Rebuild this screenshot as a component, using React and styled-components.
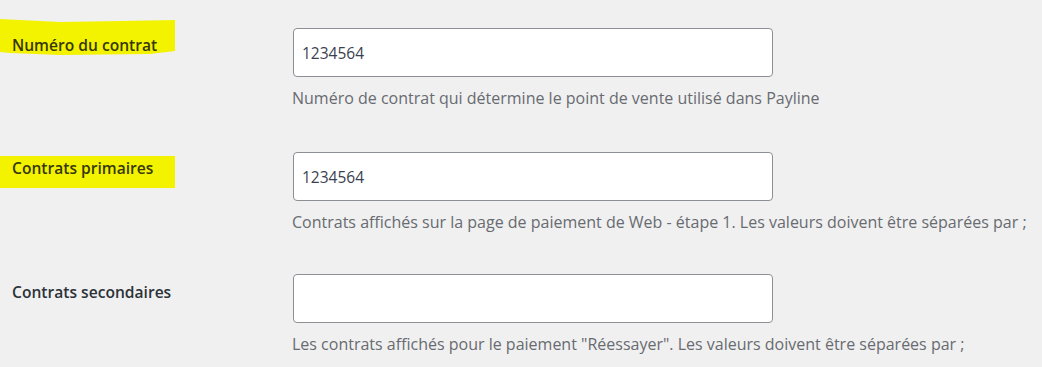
import styled, { createGlobalStyle } from "styled-components";

const GlobalStyle = createGlobalStyle`
  html, body {
    margin: 0;
    padding: 0;
    background: #f0f0f1;
  }
  body {
    font-family: "Open Sans", "Noto Sans", sans-serif;
    color: #1d2327;
  }
`;

const Form = styled.div`
  width: 1042px;
  height: 367px;
  padding-top: 28px;
  box-sizing: border-box;
  overflow: hidden;
`;

const Row = styled.div`
  display: grid;
  grid-template-columns: 293px 480px;
  margin-bottom: ${(props) => props.$gap || 44}px;
`;

const LabelCell = styled.div`
  position: relative;
`;

const Label = styled.div`
  width: 175px;
  height: ${(props) => props.$h || 32}px;
  margin-top: ${(props) => props.$top || 0}px;
  padding: ${(props) => props.$pad || 0}px 0 0 12px;
  box-sizing: border-box;
  font-size: 15.6px;
  line-height: 20px;
  font-weight: 600;
  color: ${(props) => (props.$mark ? "#363808" : "#2c3338")};
  background: ${(props) => (props.$mark ? "#f3f300" : "transparent")};
  clip-path: ${(props) => props.$clip || "none"};
  white-space: nowrap;
`;

const Field = styled.div`
  display: flex;
  flex-direction: column;
`;

const Input = styled.input`
  width: 480px;
  height: 49px;
  box-sizing: border-box;
  border: 1px solid #8c8f94;
  border-radius: 4px;
  background: #fff;
  padding: 0 8px;
  font-family: "Open Sans", "Noto Sans", sans-serif;
  font-size: 15.5px;
  color: #3c3f50;
  outline: none;
`;

const Description = styled.p`
  margin: 11px 0 0 -1px;
  font-size: 16px;
  line-height: 20px;
  color: #686b70;
  white-space: nowrap;
`;

const markerClip =
  "polygon(0 0, 20px 1px, 60px 3px, 120px 2px, 100% 1px, 100% 32px, 150px 35px, 60px 36px, 10px 34px, 0 33px)";

const fields = [
  {
    label: "Numéro du contrat",
    value: "1234564",
    help: "Numéro de contrat qui détermine le point de vente utilisé dans Payline",
    mark: true,
    top: -9,
    h: 36,
    pad: 16,
    clip: markerClip,
    gap: 44,
  },
  {
    label: "Contrats primaires",
    value: "1234564",
    help: "Contrats affichés sur la page de paiement de Web - étape 1. Les valeurs doivent être séparées par ;",
    mark: true,
    top: 4,
    h: 32,
    pad: 2,
    gap: 42,
  },
  {
    label: "Contrats secondaires",
    value: "",
    help: 'Les contrats affichés pour le paiement "Réessayer". Les valeurs doivent être séparées par ;',
    mark: false,
    top: 0,
    h: 32,
    pad: 8,
  },
];

const App = () => {
  return (
    <>
      <GlobalStyle />
      <Form>
        {fields.map((f) => (
          <Row key={f.label} $gap={f.gap}>
            <LabelCell>
              <Label
                $mark={f.mark}
                $top={f.top}
                $h={f.h}
                $pad={f.pad}
                $clip={f.clip}
              >
                {f.label}
              </Label>
            </LabelCell>
            <Field>
              <Input type="text" defaultValue={f.value} />
              <Description>{f.help}</Description>
            </Field>
          </Row>
        ))}
      </Form>
    </>
  );
};

export default App;
